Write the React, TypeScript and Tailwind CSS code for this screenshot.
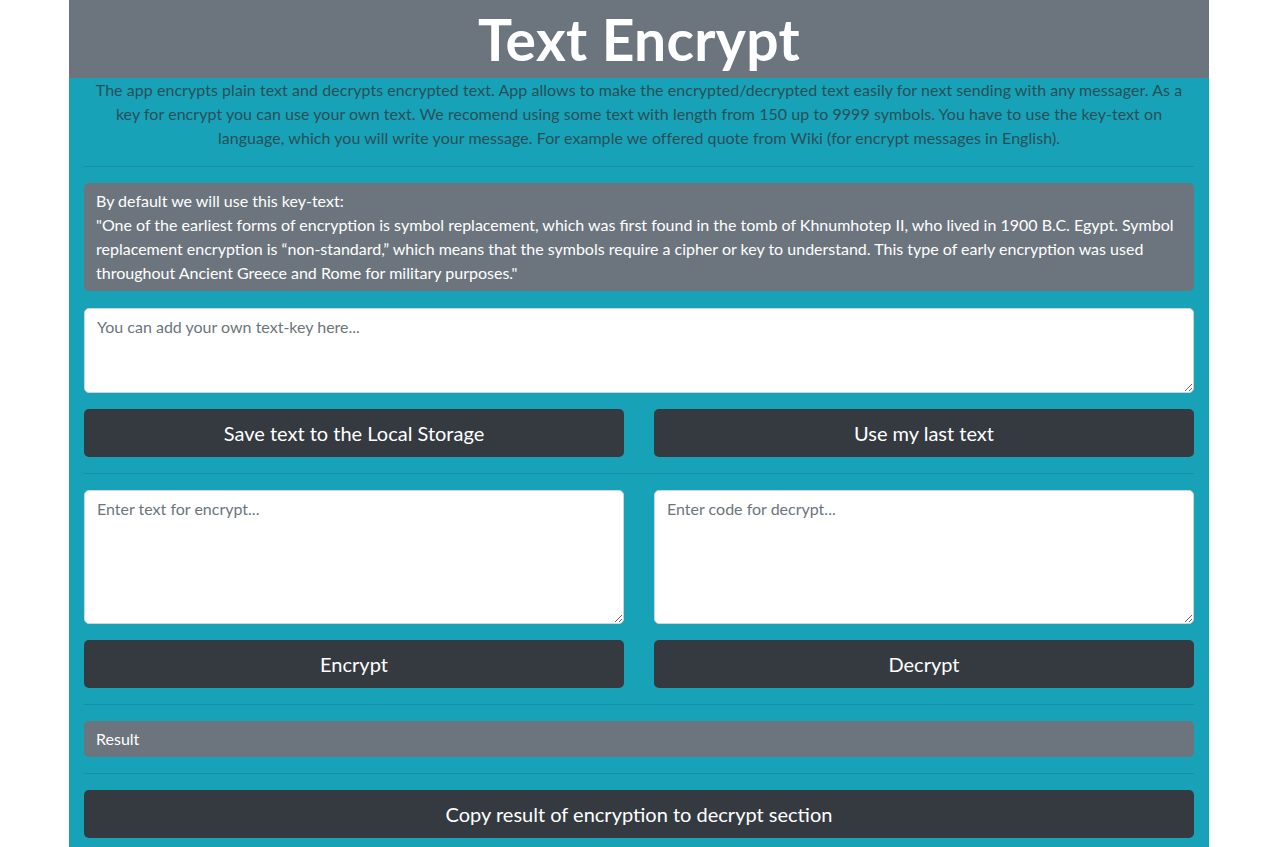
import React from "react";

const font = { fontFamily: '"Segoe UI", Lato, "Open Sans", sans-serif' };

function Hr() {
  return <div className="my-4 h-px w-full bg-black/10" />;
}

function DarkBtn({ children }: { children: React.ReactNode }) {
  return (
    <button className="h-12 w-full rounded-[5px] bg-[#343a40] text-[20px] leading-[30px] text-white">
      {children}
    </button>
  );
}

export default function App() {
  return (
    <div className="min-h-[847px] bg-white" style={font}>
      <div className="ml-[69px] w-[1140px] min-h-[847px] bg-[#17a2b8]">
        <div className="flex h-[78px] items-center justify-center bg-[#6c757d]">
          <h1 className="text-[57px] font-bold leading-none tracking-[0.3px] text-white">Text Encrypt</h1>
        </div>
        <div className="px-[15px]">
          <p className="text-center text-[16px] leading-6 tracking-[0.05px] text-[#2b4f57]">
            The app encrypts plain text and decrypts encrypted text. App allows to make the encrypted/decrypted text easily for next sending with any messager. As a
            <br />
            key for encrypt you can use your own text. We recomend using some text with length from 150 up to 9999 symbols. You have to use the key-text on
            <br />
            language, which you will write your message. For example we offered quote from Wiki (for encrypt messages in English).
          </p>
          <Hr />
          <div className="rounded-[5px] bg-[#6c757d] px-3 py-[6px] text-[16px] leading-6 text-white">
            By default we will use this key-text:
            <br />
            "One of the earliest forms of encryption is symbol replacement, which was first found in the tomb of Khnumhotep II, who lived in 1900 B.C. Egypt. Symbol
            <br />
            replacement encryption is “non-standard,” which means that the symbols require a cipher or key to understand. This type of early encryption was used
            <br />
            throughout Ancient Greece and Rome for military purposes."
          </div>
          <textarea
            className="mt-[17px] block h-[85px] w-full resize-y rounded-[5px] border border-[#ced4da] bg-white px-3 py-[6px] text-[16px] leading-6 text-[#495057] placeholder:text-[#6c757d] outline-none"
            placeholder="You can add your own text-key here..."
          />
          <div className="mt-4 grid grid-cols-2 gap-[30px]">
            <DarkBtn>Save text to the Local Storage</DarkBtn>
            <DarkBtn>Use my last text</DarkBtn>
          </div>
          <Hr />
          <div className="grid grid-cols-2 gap-x-[30px] gap-y-4">
            <textarea
              className="block h-[134px] w-full resize-y rounded-[5px] border border-[#ced4da] bg-white px-3 py-[6px] text-[16px] leading-6 text-[#495057] placeholder:text-[#6c757d] outline-none"
              placeholder="Enter text for encrypt..."
            />
            <textarea
              className="block h-[134px] w-full resize-y rounded-[5px] border border-[#ced4da] bg-white px-3 py-[6px] text-[16px] leading-6 text-[#495057] placeholder:text-[#6c757d] outline-none"
              placeholder="Enter code for decrypt..."
            />
            <DarkBtn>Encrypt</DarkBtn>
            <DarkBtn>Decrypt</DarkBtn>
          </div>
          <Hr />
          <div className="flex h-9 items-center rounded-[5px] bg-[#6c757d] px-3 text-[16px] text-white">Result</div>
          <Hr />
          <DarkBtn>Copy result of encryption to decrypt section</DarkBtn>
        </div>
      </div>
    </div>
  );
}
